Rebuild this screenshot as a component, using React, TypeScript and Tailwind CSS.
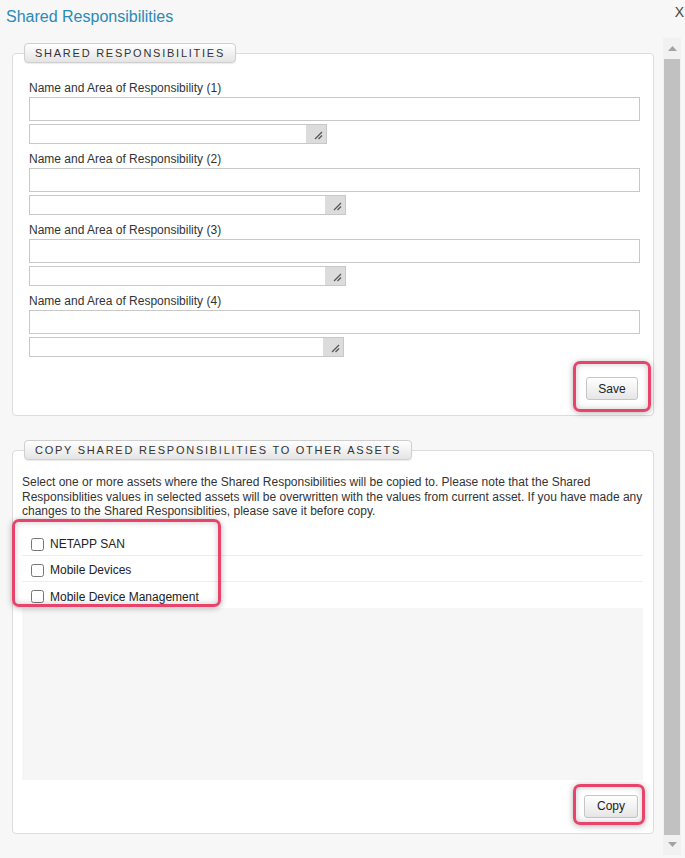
import React from "react";

const font = { fontFamily: '"Liberation Sans", Arial, sans-serif' };

function Grip() {
  return (
    <svg width="10" height="10" viewBox="0 0 10 10" className="absolute right-[3px] bottom-[3px]">
      <line x1="9" y1="2" x2="2" y2="9" stroke="#555" strokeWidth="1.2" />
      <line x1="9" y1="5.5" x2="5.5" y2="9" stroke="#555" strokeWidth="1.2" />
    </svg>
  );
}

function Group({ n, ta }: { n: number; ta: number }) {
  return (
    <div className={n === 1 ? "" : "mt-[8px]"}>
      <div className="text-[12px] leading-[14px] text-[#333]">Name and Area of Responsibility ({n})</div>
      <div className="mt-[2px] h-[24px] w-full border border-[#c8c8c8] bg-white" />
      <div className="mt-[3px] h-[20px] border border-[#c8c8c8] bg-white flex" style={{ width: ta }}>
        <div className="flex-1" />
        <div className="relative w-[20px] h-full bg-[#dcdcdc]">
          <Grip />
        </div>
      </div>
    </div>
  );
}

function Legend({ text }: { text: string }) {
  return (
    <div className="absolute left-[11px] top-[-11px] h-[20px] px-[10px] flex items-center rounded-[4px] border border-[#cfcfcf] bg-gradient-to-b from-[#ffffff] to-[#e4e4e4] text-[11px] tracking-[1.75px] text-[#333] shadow-[0_1px_1px_rgba(0,0,0,0.08)]">
      {text}
    </div>
  );
}

function Btn({ label, w }: { label: string; w: number }) {
  return (
    <div
      className="h-[23px] flex items-center justify-center rounded-[3px] border border-[#c6c6c6] bg-gradient-to-b from-[#ffffff] to-[#e6e6e6] text-[12px] text-[#222]"
      style={{ width: w }}
    >
      {label}
    </div>
  );
}

function Highlight({ l, t, w, h }: { l: number; t: number; w: number; h: number }) {
  return (
    <div
      className="absolute rounded-[7px] border-[3px] border-[#e8436a] shadow-[0_1px_6px_rgba(0,0,0,0.3),inset_0_0_6px_rgba(0,0,0,0.22)] pointer-events-none"
      style={{ left: l, top: t, width: w, height: h }}
    />
  );
}

export default function App() {
  const assets = ["NETAPP SAN", "Mobile Devices", "Mobile Device Management"];
  return (
    <div className="relative w-[685px] h-[858px] bg-[#f7f7f7] overflow-hidden flex flex-col" style={font}>
      <div className="h-[38px] flex justify-between items-start pl-[6px] pr-[1px]">
        <div className="pt-[7px] text-[16px] leading-[20px] text-[#2a8ab8]">Shared Responsibilities</div>
        <div className="pt-[4px] text-[14px] leading-[16px] text-[#444]">X</div>
      </div>
      <div className="flex">
        <div className="w-[663px] pl-[12px] pr-[9px]">
          <div className="relative mt-[15px] rounded-[4px] border border-[#dcdcdc] bg-white pt-[27px] pl-[16px] pr-[13px] pb-[15px]">
            <Legend text="SHARED RESPONSIBILITIES" />
            <Group n={1} ta={298} />
            <Group n={2} ta={317} />
            <Group n={3} ta={317} />
            <Group n={4} ta={315} />
            <div className="mt-[20px] flex justify-end pr-[2px]">
              <Btn label="Save" w={52} />
            </div>
          </div>
          <div className="relative mt-[34px] rounded-[4px] border border-[#dcdcdc] bg-white pt-[24px] pl-[9px] pr-[10px] pb-[15px]">
            <Legend text="COPY SHARED RESPONSIBILITIES TO OTHER ASSETS" />
            <p className="text-[12px] leading-[14.5px] text-[#333]">
              Select one or more assets where the Shared Responsibilities will be copied to. Please note that the Shared
              Responsiblities values in selected assets will be overwritten with the values from current asset. If you have made any
              changes to the Shared Responsiblities, please save it before copy.
            </p>
            <div className="mt-[11px] h-[250px] bg-[#f6f6f6] flex flex-col">
              {assets.map((a, i) => (
                <div
                  key={a}
                  className={`h-[26px] bg-white flex items-center pt-[4px] pl-[9px] ${i < 2 ? "border-b border-[#eeeeee]" : ""}`}
                >
                  <input type="checkbox" className="m-0 w-[13px] h-[13px]" />
                  <span className="ml-[6px] text-[12px] text-[#222]">{a}</span>
                </div>
              ))}
            </div>
            <div className="mt-[15px] flex justify-end pr-[5px]">
              <Btn label="Copy" w={54} />
            </div>
          </div>
        </div>
        <div className="w-[18px] h-[817px] bg-[#f1f1f1] flex flex-col">
          <div className="h-[21px] flex items-center justify-center">
            <svg width="9" height="6" viewBox="0 0 9 6"><polygon points="0,5 9,5 4.5,0" fill="#a3a3a3" /></svg>
          </div>
          <div className="flex-1 mx-[1px] bg-[#c1c1c1]" />
          <div className="h-[20px] flex items-center justify-center">
            <svg width="9" height="6" viewBox="0 0 9 6"><polygon points="0,0 9,0 4.5,5" fill="#a3a3a3" /></svg>
          </div>
        </div>
      </div>
      <Highlight l={573} t={361} w={78} h={51} />
      <Highlight l={12} t={519} w={209} h={88} />
      <Highlight l={573} t={784} w={72} h={41} />
    </div>
  );
}
